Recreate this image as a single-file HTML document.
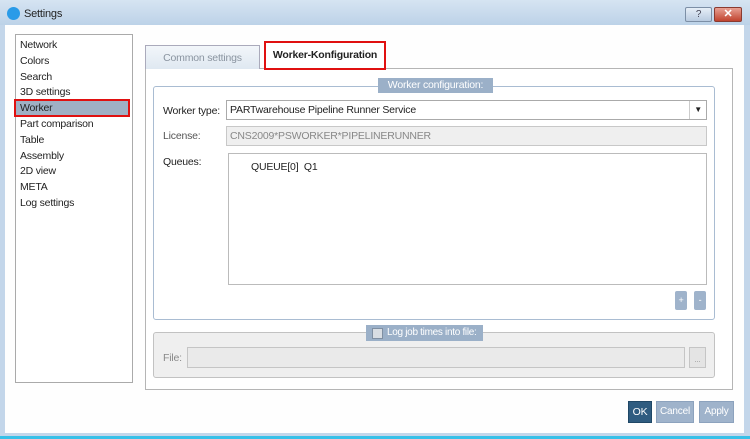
<!DOCTYPE html><html><head><style>
*{box-sizing:border-box}body{margin:0;width:750px;height:439px;overflow:hidden;background:#c3d6ea;font-family:"Liberation Sans",sans-serif;font-size:10.5px;letter-spacing:-0.2px;color:#222;position:relative}
.a{position:absolute;white-space:nowrap}
</style></head><body>
<div class="a" style="left:0;top:0;width:750px;height:25px;background:linear-gradient(#d6e4f2,#bcd2e8)"></div>
<div class="a" style="left:7px;top:7px;width:13px;height:13px;border-radius:50%;background:#2a9be8"></div>
<div class="a" style="left:24px;top:8px;font-size:11px">Settings</div>
<div class="a" style="left:685px;top:7px;width:27px;height:15px;border:1px solid #7c8fa6;border-radius:2px;background:linear-gradient(#e6eef7,#b9cbe0);text-align:center;font-size:10px;line-height:13px;color:#445">?</div>
<div class="a" style="left:714px;top:7px;width:28px;height:15px;border:1px solid #8a3a30;border-radius:2px;background:linear-gradient(#e8a093,#c0432e);text-align:center;color:#fff;font-weight:bold;font-size:11px;line-height:13px">✕</div>
<div class="a" style="left:5px;top:25px;width:739px;height:408px;background:#fefefe"></div>
<div class="a" style="left:0;top:436px;width:750px;height:3px;background:#37c0e8"></div>
<div class="a" style="left:15px;top:34px;width:118px;height:349px;border:1px solid #aaa;background:#fff"></div>
<div class="a" style="left:20px;top:38px;line-height:15.8px">Network<br>Colors<br>Search<br>3D settings<br><span style="visibility:hidden">W</span><br>Part comparison<br>Table<br>Assembly<br>2D view<br>META<br>Log settings</div>
<div class="a" style="left:14px;top:99px;width:116px;height:18px;border:2px solid #e01010;background:#9fb0c4;padding-left:4px;line-height:14px">Worker</div>
<div class="a" style="left:145px;top:68px;width:588px;height:322px;border:1px solid #b5b5b5;background:#fff"></div>
<div class="a" style="left:145px;top:45px;width:115px;height:24px;border:1px solid #aab;border-bottom:none;background:linear-gradient(#f2f6fa,#dfe8f1);text-align:center;line-height:24px;color:#8a94a0">Common settings</div>
<div class="a" style="left:264px;top:41px;width:122px;height:29px;border:2px solid #e01010;background:#fff;text-align:center;line-height:25px;font-weight:bold;font-size:10.5px">Worker-Konfiguration</div>
<div class="a" style="left:153px;top:86px;width:562px;height:234px;border:1px solid #a9bcd2;border-radius:3px"></div>
<div class="a" style="left:378px;top:78px;width:115px;height:15px;background:#9bb0c8;color:#fff;text-align:center;line-height:15px">Worker configuration:</div>
<div class="a" style="left:163px;top:104px;line-height:14px">Worker type:</div>
<div class="a" style="left:226px;top:100px;width:481px;height:20px;border:1px solid #aaa;background:#fff;padding-left:3px;line-height:18px">PARTwarehouse Pipeline Runner Service<span style="position:absolute;right:4px;top:0;font-size:8px">▼</span><span style="position:absolute;right:16px;top:0;width:1px;height:18px;background:#ccc"></span></div>
<div class="a" style="left:163px;top:130px;color:#555">License:</div>
<div class="a" style="left:226px;top:126px;width:481px;height:20px;border:1px solid #c8c8c8;background:#efefef;padding-left:3px;line-height:18px;color:#888">CNS2009*PSWORKER*PIPELINERUNNER</div>
<div class="a" style="left:163px;top:156px">Queues:</div>
<div class="a" style="left:228px;top:153px;width:479px;height:132px;border:1px solid #bbb;background:#fff;padding:6px 22px;line-height:14px">QUEUE[0]&nbsp; Q1</div>
<div class="a" style="left:675px;top:291px;width:12px;height:19px;background:#9fb3cb;border-radius:2px;color:#fff;text-align:center;line-height:19px;font-size:9px">+</div>
<div class="a" style="left:694px;top:291px;width:12px;height:19px;background:#9fb3cb;border-radius:2px;color:#fff;text-align:center;line-height:19px;font-size:9px">-</div>
<div class="a" style="left:153px;top:332px;width:562px;height:46px;border:1px solid #c2c2c2;border-radius:3px;background:#efefef"></div>
<div class="a" style="left:366px;top:325px;width:117px;height:16px;background:#9bb0c8;color:#fff;line-height:16px;padding-left:21px;font-size:10px;letter-spacing:-0.3px">Log job times into file:</div>
<div class="a" style="left:372px;top:328px;width:11px;height:11px;border:1px solid #7f8fa2;background:#d8dde3"></div>
<div class="a" style="left:163px;top:352px;color:#888">File:</div>
<div class="a" style="left:187px;top:347px;width:498px;height:21px;border:1px solid #c5c5c5;background:#eaeaea"></div>
<div class="a" style="left:689px;top:347px;width:17px;height:21px;border:1px solid #c5c5c5;background:#e4e4e4;font-size:8px;color:#999;text-align:center;line-height:24px">...</div>
<div class="a" style="left:628px;top:401px;width:24px;height:22px;background:#2f5c80;border:1px solid #1f4766;color:#fff;text-align:center;line-height:20px">OK</div>
<div class="a" style="left:656px;top:401px;width:38px;height:22px;background:#9fb3cb;border:1px solid #8ca2bd;color:#fff;text-align:center;line-height:20px;font-size:10px">Cancel</div>
<div class="a" style="left:699px;top:401px;width:35px;height:22px;background:#9fb3cb;border:1px solid #8ca2bd;color:#fff;text-align:center;line-height:20px;font-size:10px">Apply</div>
</body></html>
